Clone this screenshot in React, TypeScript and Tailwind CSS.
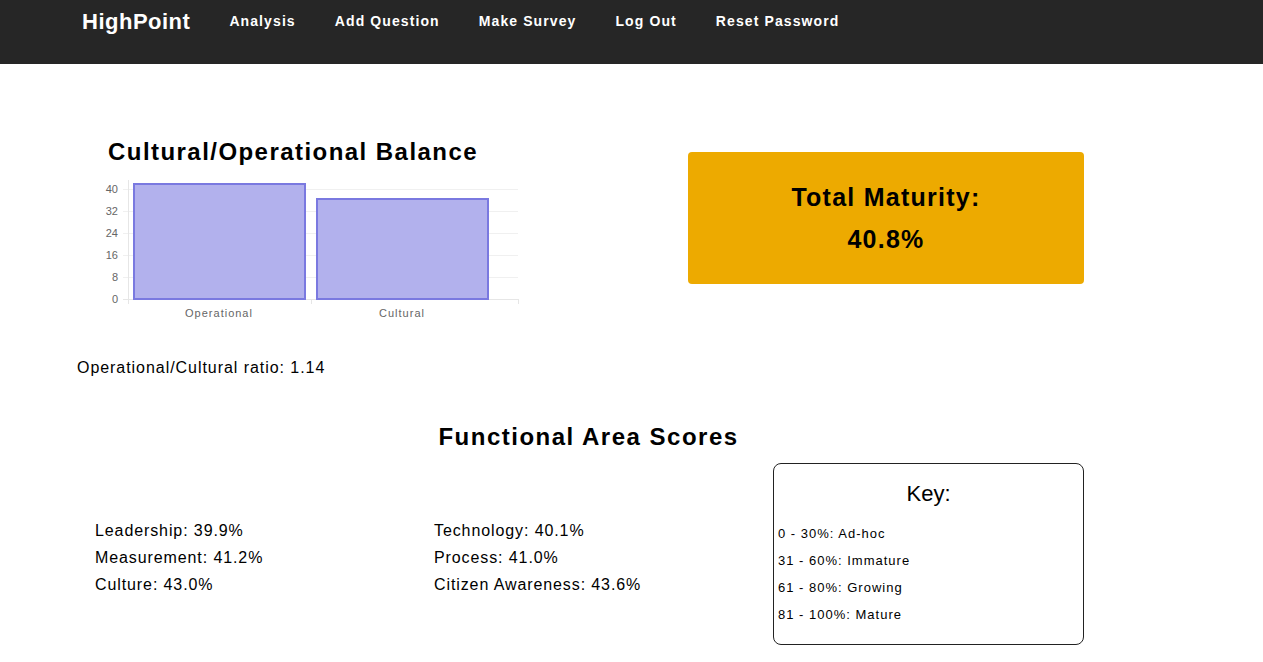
const navLinks = ["Analysis", "Add Question", "Make Survey", "Log Out", "Reset Password"];

const scoresLeft = ["Leadership: 39.9%", "Measurement: 41.2%", "Culture: 43.0%"];
const scoresRight = ["Technology: 40.1%", "Process: 41.0%", "Citizen Awareness: 43.6%"];
const keyRows = ["0 - 30%: Ad-hoc", "31 - 60%: Immature", "61 - 80%: Growing", "81 - 100%: Mature"];

function BalanceChart() {
  const ticks = [40, 32, 24, 16, 8, 0];
  return (
    <svg width="420" height="145" viewBox="0 0 420 145" className="block">
      {ticks.map((t, i) => {
        const y = 9 + i * 22;
        return (
          <g key={t}>
            <line x1="23" x2="418" y1={y + 0.5} y2={y + 0.5} stroke={t === 0 ? "#e6e6e6" : "#f0f0f0"} />
            <text x="18" y={y + 4} textAnchor="end" fontSize="11" fill="#666" fontFamily="Liberation Sans, Arial, sans-serif">
              {t}
            </text>
          </g>
        );
      })}
      <line x1="28.5" x2="28.5" y1="0" y2="124" stroke="#e6e6e6" />
      <line x1="211.5" x2="211.5" y1="119" y2="124" stroke="#e6e6e6" />
      <line x1="418.5" x2="418.5" y1="119" y2="124" stroke="#e6e6e6" />
      <rect x="34" y="4" width="171" height="115" fill="#b2b1ed" stroke="#7a79e0" strokeWidth="2" />
      <rect x="217" y="19" width="171" height="100" fill="#b2b1ed" stroke="#7a79e0" strokeWidth="2" />
      <text x="119" y="137" textAnchor="middle" fontSize="11" letterSpacing="1" fill="#666" fontFamily="Liberation Sans, Arial, sans-serif">
        Operational
      </text>
      <text x="302" y="137" textAnchor="middle" fontSize="11" letterSpacing="1" fill="#666" fontFamily="Liberation Sans, Arial, sans-serif">
        Cultural
      </text>
    </svg>
  );
}

export default function App() {
  return (
    <div className="min-h-screen bg-white font-['Liberation_Sans',Arial,sans-serif] text-black">
      <nav className="h-16 bg-[#262626] pl-[82px]">
        <div className="flex h-[43px] items-center gap-[39px]">
          <span className="text-[22px] font-bold tracking-[0.5px] text-white">HighPoint</span>
          {navLinks.map((l) => (
            <a key={l} href="#" className="text-[14px] font-bold tracking-[1.1px] text-white">
              {l}
            </a>
          ))}
        </div>
      </nav>

      <main className="pl-[77px]">
        <div className="flex pt-[74px]">
          <div className="w-[450px]">
            <h2 className="ml-[31px] text-[24px] font-bold leading-[28px] tracking-[1.45px]">
              Cultural/Operational Balance
            </h2>
            <div className="ml-[23px] mt-[14px]">
              <BalanceChart />
            </div>
            <p className="mt-[31px] text-[16px] leading-6 tracking-[0.95px]">Operational/Cultural ratio: 1.14</p>
          </div>
          <div className="ml-[161px] mt-[14px] flex h-[132px] w-[396px] flex-col items-center justify-center rounded-[4px] bg-[#edaa00]">
            <div className="text-[25px] font-bold leading-[42px] tracking-[1.25px]">Total Maturity:</div>
            <div className="text-[25px] font-bold leading-[42px] tracking-[1.25px]">40.8%</div>
          </div>
        </div>

        <h2 className="mt-[43px] w-[1023px] text-center text-[24px] font-bold leading-[28px] tracking-[1.5px]">
          Functional Area Scores
        </h2>

        <div className="ml-[18px] mt-[12px] grid grid-cols-[339px_339px_311px]">
          <div className="pt-[54px]">
            {scoresLeft.map((s) => (
              <p key={s} className="text-[16px] leading-[27px] tracking-[0.9px]">
                {s}
              </p>
            ))}
          </div>
          <div className="pt-[54px]">
            {scoresRight.map((s) => (
              <p key={s} className="text-[16px] leading-[27px] tracking-[0.9px]">
                {s}
              </p>
            ))}
          </div>
          <div className="h-[182px] rounded-[8px] border border-[#222] px-[4px]">
            <div className="mt-[16px] text-center text-[22px] leading-[28px]">Key:</div>
            <div className="mt-[12px]">
              {keyRows.map((k) => (
                <p key={k} className="text-[13px] leading-[27px] tracking-[1px]">
                  {k}
                </p>
              ))}
            </div>
          </div>
        </div>
      </main>
    </div>
  );
}
